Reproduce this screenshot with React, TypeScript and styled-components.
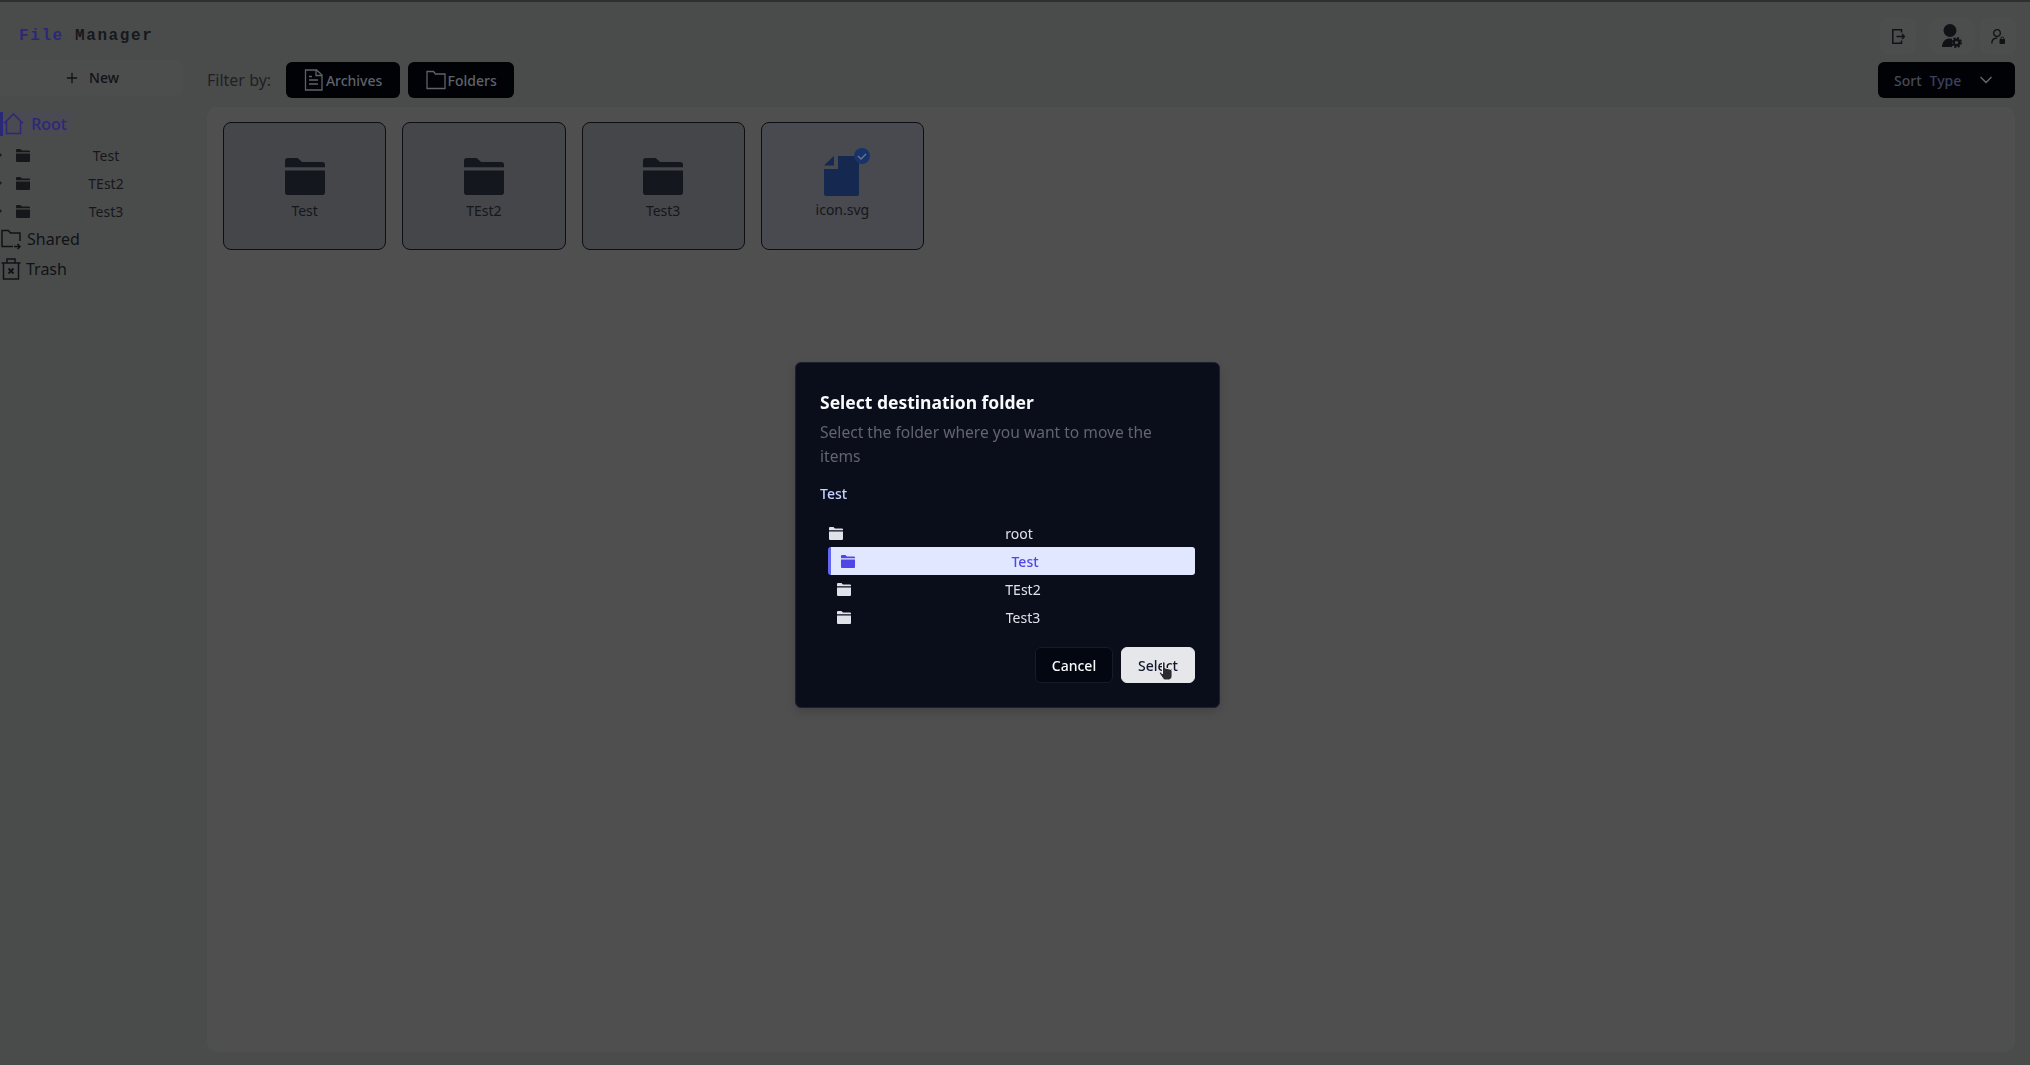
import React from 'react';
import styled, { createGlobalStyle } from 'styled-components';
import { ChevronDown, Plus } from 'lucide-react';

const GlobalStyle = createGlobalStyle`
    html, body {
        margin: 0;
        padding: 0;
        height: 100%;
        background: #4a4c4b;
        font-family: 'Noto Sans', sans-serif;
        overflow: hidden;
    }
`;

const Page = styled.div`
    width: 2030px;
    height: 1065px;
    display: flex;
    flex-direction: column;
    border-top: 2px solid #2e3030;
    box-sizing: border-box;
`;

const Header = styled.header`
    height: 58px;
    flex: none;
    display: flex;
    align-items: center;
    justify-content: space-between;
    padding: 10px 14px 0 19px;
    box-sizing: border-box;
`;

const Logo = styled.div`
    font-family: 'Liberation Mono', monospace;
    font-weight: 700;
    font-size: 16px;
    letter-spacing: 1.6px;
    color: #17181c;
    span {
        color: #2c2878;
    }
`;

const HeaderIcons = styled.div`
    display: flex;
    align-items: center;
    gap: 6px;
`;

const IconSquare = styled.div<{ $w: number; $after?: number }>`
    width: ${(p) => p.$w}px;
    height: 36px;
    margin-right: ${(p) => p.$after ?? 0}px;
    display: flex;
    align-items: center;
    justify-content: center;
    border-radius: 8px;
    background: #4c4e4d;
    color: #101216;
`;

const Body = styled.div`
    flex: 1;
    display: flex;
    min-height: 0;
`;

const Sidebar = styled.aside`
    width: 207px;
    flex: none;
    color: #111216;
`;

const NewButton = styled.div`
    width: 183px;
    height: 36px;
    display: flex;
    align-items: center;
    justify-content: center;
    gap: 9px;
    padding-bottom: 1px;
    box-sizing: border-box;
    border-radius: 0 6px 6px 0;
    background: #4c4e4d;
    font-size: 14px;
    font-weight: 500;
`;

const RootRow = styled.div`
    margin-top: 16px;
    height: 24px;
    width: 68px;
    display: flex;
    align-items: center;
    gap: 3px;
    border-left: 3px solid #2c2878;
    color: #2c2878;
    background: #4a4a52;
    font-size: 16px;
    font-weight: 500;
`;

const TreeRows = styled.div`
    margin: 5px 0 -1px;
    display: flex;
    flex-direction: column;
`;

const TreeRow = styled.div`
    height: 28px;
    display: grid;
    grid-template-columns: 16px 17px 1fr;
    align-items: center;
    width: 179px;
    font-size: 14px;
    color: #16171b;
`;

const Caret = styled.i`
    width: 0;
    height: 0;
    border-left: 2px solid #1b1c20;
    border-top: 2.5px solid transparent;
    border-bottom: 2.5px solid transparent;
`;

const CenteredLabel = styled.span`
    text-align: center;
`;

const SideLink = styled.div`
    height: 30px;
    display: flex;
    align-items: center;
    gap: 5px;
    padding-left: 1px;
    font-size: 16px;
`;

const Main = styled.main`
    flex: 1;
    display: flex;
    flex-direction: column;
    min-width: 0;
    padding-top: 2px;
`;

const Toolbar = styled.div`
    height: 36px;
    flex: none;
    display: flex;
    align-items: center;
    gap: 8px;
    padding-right: 15px;
`;

const FilterLabel = styled.span`
    font-size: 16px;
    color: #1f2024;
    margin-right: 7px;
`;

const DarkButton = styled.div<{ $w: number }>`
    width: ${(p) => p.$w}px;
    height: 36px;
    display: flex;
    align-items: center;
    justify-content: center;
    gap: 2px;
    box-sizing: border-box;
    border-radius: 6px;
    background: #010206;
    color: #5f626b;
    font-size: 14px;
    font-weight: 500;
`;

const SortButton = styled(DarkButton)`
    margin-left: auto;
    justify-content: flex-start;
    padding: 0 19px 0 16px;
    gap: 8px;
    color: #474a55;
    svg {
        margin-left: auto;
        color: #5f626b;
    }
`;

const SortValue = styled.span`
    color: #3b4160;
`;

const Panel = styled.section`
    margin: 9px 15px 0 0;
    height: 945px;
    flex: none;
    padding: 15px 16px;
    box-sizing: border-box;
    display: flex;
    align-items: flex-start;
    gap: 16px;
    background: #4f4f4f;
    border-radius: 10px;
`;

const Card = styled.div<{ $tint?: boolean }>`
    width: 163.25px;
    height: 128px;
    box-sizing: border-box;
    display: flex;
    flex-direction: column;
    align-items: center;
    gap: ${(p) => (p.$tint ? 4 : 6)}px;
    padding-top: ${(p) => (p.$tint ? 33 : 35)}px;
    border: 1px solid #0d0e12;
    border-radius: 8px;
    background: ${(p) => (p.$tint ? '#484a4f' : '#454649')};
    font-size: 14px;
    color: #14161b;
`;

const BadgedFile = styled.div`
    position: relative;
    height: 40px;
    svg {
        display: block;
    }
`;

const CheckBadge = styled.span`
    position: absolute;
    right: -10px;
    top: -8px;
    width: 16px;
    height: 16px;
    border-radius: 50%;
    background: #183369;
`;

const Dialog = styled.div`
    position: fixed;
    left: 795px;
    top: 362px;
    width: 425px;
    height: 346px;
    box-sizing: border-box;
    padding: 25px 24px 24px;
    background: #0a0d1a;
    border: 1px solid #1c2130;
    border-radius: 6px;
    box-shadow: 0 4px 10px rgba(0, 0, 0, 0.15);
    display: flex;
    flex-direction: column;
`;

const Title = styled.h2`
    margin: 0;
    font-size: 17.5px;
    line-height: 28px;
    font-weight: 700;
    color: #f8fafc;
`;

const Description = styled.p`
    margin: 3.5px 0 0;
    font-size: 15.6px;
    line-height: 24px;
    color: #62646f;
`;

const CurrentFolder = styled.div`
    margin-top: 16.5px;
    font-size: 14px;
    line-height: 20px;
    font-weight: 500;
    color: #c7d2fe;
`;

const FolderList = styled.div`
    margin-top: 15px;
    margin-left: 8px;
    display: flex;
    flex-direction: column;
`;

const FolderRow = styled.div<{ $selected?: boolean; $indent: number }>`
    height: 28px;
    display: flex;
    align-items: center;
    box-sizing: border-box;
    padding-left: ${(p) => p.$indent}px;
    font-size: 14px;
    font-weight: ${(p) => (p.$selected ? 500 : 400)};
    color: ${(p) => (p.$selected ? '#4f46e5' : '#e0e2ea')};
    background: ${(p) => (p.$selected ? '#e0e7ff' : 'transparent')};
    border-left: ${(p) => (p.$selected ? '3px solid #6366f1' : 'none')};
    border-radius: 3px;
    span {
        flex: 1;
        text-align: center;
    }
`;

const Actions = styled.div`
    margin-top: auto;
    display: flex;
    justify-content: flex-end;
    gap: 8px;
`;

const ActionButton = styled.div<{ $primary?: boolean }>`
    position: relative;
    height: 36px;
    width: ${(p) => (p.$primary ? 74 : 78)}px;
    box-sizing: border-box;
    display: flex;
    align-items: center;
    justify-content: center;
    border-radius: 6px;
    font-size: 14px;
    font-weight: 500;
    color: ${(p) => (p.$primary ? '#111827' : '#f8fafc')};
    background: ${(p) => (p.$primary ? '#e5e7eb' : '#030712')};
    border: 1px solid ${(p) => (p.$primary ? '#e5e7eb' : '#161b28')};
`;

const CursorMark = styled.svg`
    position: absolute;
    left: 36px;
    top: 13px;
`;

const FolderSolid = ({ size = 14, color = 'currentColor' }: { size?: number; color?: string }) => (
    <svg width={size} height={(size * 13) / 14} viewBox="0 0 14 13" fill={color}>
        <path d="M0 1a1 1 0 0 1 1-1h3.400l1.600 1.400h7a1 1 0 0 1 1 1v.8H0z" />
        <path d="M0 4.400h14v7.600a1 1 0 0 1-1 1H1a1 1 0 0 1-1-1z" />
    </svg>
);

const FileOutline = () => (
    <svg width="20" height="22" viewBox="0 0 20 22" fill="none" stroke="currentColor" strokeWidth="1.3">
        <path d="M1.500 1h11l5.500 5v15H1.500z" />
        <path d="M12 1v5.500h6M5 11h9M5 15h9M5 7.500h3" />
    </svg>
);

const FolderOutline = () => (
    <svg width="20" height="20" viewBox="0 0 20 20" fill="none" stroke="currentColor" strokeWidth="1.3">
        <path d="M1 18.500V1.500h6.500l2 2.500h9.500v14.500z" />
    </svg>
);

const HomeIcon = () => (
    <svg width="21" height="22" viewBox="0 0 21 22" fill="none" stroke="currentColor" strokeWidth="1.5">
        <path d="M1 10.500 10.500 1 20 10.500M3.500 8.500V20.500h14V8.500" />
    </svg>
);

const SharedIcon = () => (
    <svg width="21" height="21" viewBox="0 0 21 21" fill="none" stroke="currentColor" strokeWidth="1.5">
        <path d="M12 17.500H1V1.500h6.500l2 2.500h9.500v8" />
        <path d="M13 17.500h6M16.500 15l2.500 2.500-2.500 2.500" />
    </svg>
);

const TrashIcon = () => (
    <svg width="20" height="22" viewBox="0 0 20 22" fill="none" stroke="currentColor" strokeWidth="1.5">
        <path d="M0.500 5h19M6 5V1h8v4M2.500 5v16h15V5" />
        <path d="M7.500 10.500l5 5M12.500 10.500l-5 5" strokeWidth="1.9" />
    </svg>
);

const ExitIcon = () => (
    <svg width="13" height="15" viewBox="0 0 13 15" fill="none" stroke="currentColor" strokeWidth="1.5">
        <path d="M9.500 3.500V0.800H0.800v13.400h8.700v-2.700" />
        <path d="M4.500 7.500h8M10 5l2.500 2.500L10 10" />
    </svg>
);

const UserCogIcon = () => (
    <svg width="20" height="24" viewBox="0 0 20 24" fill="currentColor">
        <circle cx="8" cy="6.500" r="6.500" />
        <path d="M0 23c0-5 3-8 7-8.500 1.500 0 2.500.2 3 .4V23z" />
        <circle cx="14.500" cy="18.500" r="2.800" fill="none" stroke="currentColor" strokeWidth="2.400" />
        <circle
            cx="14.500"
            cy="18.500"
            r="4.600"
            fill="none"
            stroke="currentColor"
            strokeWidth="1.800"
            strokeDasharray="2 1.610"
        />
    </svg>
);

const UserLockIcon = () => (
    <svg width="14" height="15" viewBox="0 0 14 15" fill="none" stroke="currentColor" strokeWidth="1.300">
        <circle cx="6" cy="4" r="3.300" />
        <path d="M0.800 14.500c0-3.500 2-5.500 5.500-5.500" />
        <rect x="8.500" y="10" width="5.500" height="5" rx="1" fill="currentColor" stroke="none" />
        <path d="M9.800 10.500V9.500a1.500 1.500 0 0 1 3 0v1" strokeWidth="1" />
    </svg>
);

const FileShape = () => (
    <svg width="36" height="40" viewBox="0 0 36 40">
        <path d="M0 9.500 10 0v9.500z" fill="#142850" />
        <path d="M14 0h21v38a2 2 0 0 1-2 2H2a2 2 0 0 1-2-2V13h14z" fill="#142850" />
    </svg>
);

const HandCursor = () => (
    <CursorMark width="16" height="21" viewBox="0 0 16 21">
        <path
            d="M4.500 2a1.300 1.300 0 0 1 2.600 0v5l4.500 1c1.500.4 2.500 1.200 2.500 2.700V15c0 2-1.500 4-3.500 4H7.500c-1.500 0-2.300-.8-3-2L1.500 12.500c-.6-1 .7-2 1.600-1.200L4.500 13z"
            fill="#2c2c2e"
            stroke="#f5f5f5"
            strokeWidth="1"
        />
    </CursorMark>
);

const cards = ['Test', 'TEst2', 'Test3'];

const App = () => {
    return (
        <>
            <GlobalStyle />
            <Page>
                <Header>
                    <Logo>
                        <span>File</span> Manager
                    </Logo>
                    <HeaderIcons>
                        <IconSquare $w={36} $after={8}>
                            <ExitIcon />
                        </IconSquare>
                        <IconSquare $w={44}>
                            <UserCogIcon />
                        </IconSquare>
                        <IconSquare $w={36}>
                            <UserLockIcon />
                        </IconSquare>
                    </HeaderIcons>
                </Header>
                <Body>
                    <Sidebar>
                        <NewButton>
                            <Plus size={16} />
                            New
                        </NewButton>
                        <RootRow>
                            <HomeIcon />
                            &nbsp;Root
                        </RootRow>
                        <TreeRows>
                            {cards.map((name) => (
                                <TreeRow key={name}>
                                    <Caret />
                                    <FolderSolid />
                                    <CenteredLabel>{name}</CenteredLabel>
                                </TreeRow>
                            ))}
                        </TreeRows>
                        <SideLink>
                            <SharedIcon />
                            Shared
                        </SideLink>
                        <SideLink>
                            <TrashIcon />
                            Trash
                        </SideLink>
                    </Sidebar>
                    <Main>
                        <Toolbar>
                            <FilterLabel>Filter by:</FilterLabel>
                            <DarkButton $w={114}>
                                <FileOutline />
                                Archives
                            </DarkButton>
                            <DarkButton $w={106}>
                                <FolderOutline />
                                Folders
                            </DarkButton>
                            <SortButton $w={137}>
                                Sort <SortValue>Type</SortValue>
                                <ChevronDown size={20} />
                            </SortButton>
                        </Toolbar>
                        <Panel>
                            {cards.map((name) => (
                                <Card key={name}>
                                    <FolderSolid size={40} color="#14171d" />
                                    {name}
                                </Card>
                            ))}
                            <Card $tint>
                                <BadgedFile>
                                    <FileShape />
                                    <CheckBadge>
                                        <svg width="16" height="16" viewBox="0 0 16 16" fill="none" stroke="#6b7690" strokeWidth="1.3">
                                            <path d="M4 8l3 3 5-5" />
                                        </svg>
                                    </CheckBadge>
                                </BadgedFile>
                                icon.svg
                            </Card>
                        </Panel>
                    </Main>
                </Body>
            </Page>
            <Dialog>
                <Title>Select destination folder</Title>
                <Description>Select the folder where you want to move the items</Description>
                <CurrentFolder>Test</CurrentFolder>
                <FolderList>
                    <FolderRow $indent={1}>
                        <FolderSolid />
                        <span>root</span>
                    </FolderRow>
                    <FolderRow $selected $indent={10}>
                        <FolderSolid />
                        <span>Test</span>
                    </FolderRow>
                    <FolderRow $indent={9}>
                        <FolderSolid />
                        <span>TEst2</span>
                    </FolderRow>
                    <FolderRow $indent={9}>
                        <FolderSolid />
                        <span>Test3</span>
                    </FolderRow>
                </FolderList>
                <Actions>
                    <ActionButton>Cancel</ActionButton>
                    <ActionButton $primary>
                        Select
                        <HandCursor />
                    </ActionButton>
                </Actions>
            </Dialog>
        </>
    );
};

export default App;
